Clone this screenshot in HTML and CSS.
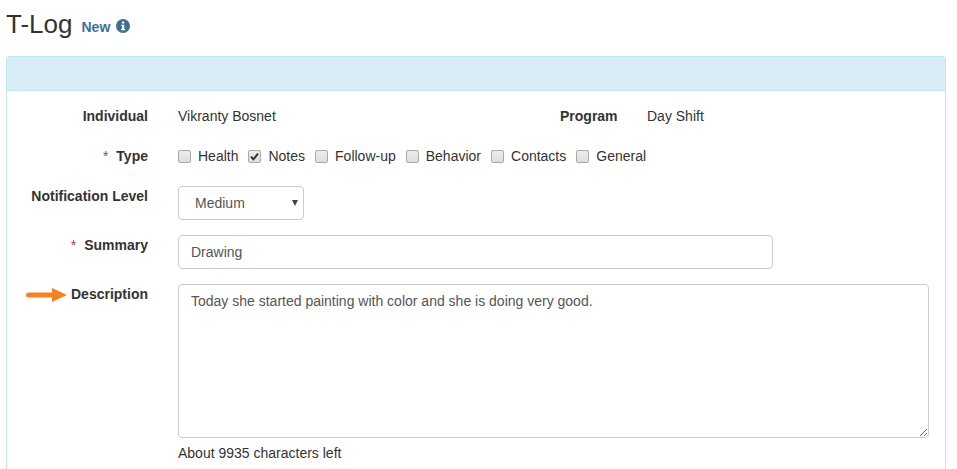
FILE: index.html
```html
<!DOCTYPE html>
<html lang="en">
<head>
<meta charset="utf-8">
<title>T-Log</title>
<link rel="stylesheet" href="styles.css">
</head>
<body>
<header class="page-title">
  <h1>T-Log</h1>
  <span class="status">New</span>
  <svg class="info" viewBox="0 0 14 14" width="14" height="14" aria-hidden="true">
    <circle cx="7" cy="7" r="7" fill="#3f6f91"/>
    <rect x="5.9" y="2.4" width="2.4" height="2.2" rx=".4" fill="#fff"/>
    <path d="M5.2 5.7h3.1v4.2h.8v1.4H5.1V9.9h.9V7.1h-.8z" fill="#fff"/>
  </svg>
</header>
<section class="panel">
  <div class="panel-heading"></div>
  <form class="panel-body">
    <div class="row">
      <div class="label">Individual</div>
      <div class="value split">
        <span class="cell-name">Vikranty Bosnet</span>
        <span class="label program">Program</span>
        <span>Day Shift</span>
      </div>
    </div>
    <div class="row">
      <div class="label"><span class="req">*</span>Type</div>
      <div class="value checks">
        <label class="check"><span class="box"></span>Health</label>
        <label class="check"><span class="box"><svg viewBox="0 0 13 13" width="13" height="13"><path d="M3 6.6l2.4 2.7L10 3.6" fill="none" stroke="#333" stroke-width="2"/></svg></span>Notes</label>
        <label class="check"><span class="box"></span>Follow-up</label>
        <label class="check"><span class="box"></span>Behavior</label>
        <label class="check"><span class="box"></span>Contacts</label>
        <label class="check"><span class="box"></span>General</label>
      </div>
    </div>
    <div class="row tall">
      <div class="label">Notification Level</div>
      <div class="value">
        <div class="control select">Medium<span class="caret"></span></div>
      </div>
    </div>
    <div class="row tall">
      <div class="label"><span class="req">*</span>Summary</div>
      <div class="value">
        <input class="control input" type="text" value="Drawing">
      </div>
    </div>
    <div class="row">
      <div class="label description">
        <svg class="arrow" viewBox="0 0 42 16" width="42" height="16" aria-hidden="true">
          <path d="M2.5 8H28" stroke="#f58220" stroke-width="5" stroke-linecap="round"/>
          <path d="M26 1l15 7-15 7z" fill="#f58220"/>
        </svg>
        Description
      </div>
      <div class="value">
        <textarea class="control area">Today she started painting with color and she is doing very good.</textarea>
        <div class="help">About 9935 characters left</div>
      </div>
    </div>
  </form>
</section>
</body>
</html>
```
FILE: styles.css
```css
* { box-sizing: border-box; }
html, body { height: 469px; overflow: hidden; }
body {
  margin: 0;
  padding: 0 11px 0 6px;
  background: #fff;
  color: #333;
  font: 14px/20px "Liberation Sans", Arial, sans-serif;
}
.page-title {
  display: flex;
  align-items: center;
  height: 56px;
  padding-bottom: 8px;
}
h1 {
  margin: 0 9px 0 0;
  font-size: 26px;
  font-weight: 400;
  line-height: 28px;
}
.status {
  margin: 6px 6px 0 0;
  color: #3f7099;
  font-weight: 700;
}
.info { margin-top: 4px; }
.panel {
  height: 430px;
  border: 1px solid #bce8f1;
  border-bottom: 0;
  border-radius: 4px 4px 0 0;
}
.panel-heading {
  height: 34px;
  background: #d9edf7;
  border-bottom: 1px solid #bce8f1;
  border-radius: 3px 3px 0 0;
}
.panel-body { padding: 15px 16px 0 0; }
.row { display: flex; margin-bottom: 20px; }
.row.tall { margin-bottom: 15px; }
.label {
  flex: 0 0 141px;
  text-align: right;
  font-weight: 700;
  position: relative;
}
.req {
  margin-right: 8px;
  color: #a94442;
  font-weight: 400;
}
.value { margin-left: 30px; flex: 1; min-width: 0; }
.split { display: flex; }
.cell-name { width: 382px; }
.label.program { flex: 0 0 auto; width: 57px; margin-right: 30px; white-space: nowrap; }
.checks { display: flex; }
.check { display: flex; align-items: center; margin-right: 10px; }
.box {
  display: block;
  width: 13px;
  height: 13px;
  margin-right: 7px;
  border: 1px solid #a9a9a9;
  border-radius: 2px;
  background: linear-gradient(#ededed, #dedede);
  position: relative;
}
.box svg { display: block; margin: -1px; }
.control {
  display: block;
  border: 1px solid #ccc;
  border-radius: 4px;
  background: #fff;
  color: #555;
  font: 14px/20px "Liberation Sans", Arial, sans-serif;
}
.select {
  position: relative;
  width: 126px;
  height: 34px;
  padding: 6px 16px;
}
.caret {
  position: absolute;
  right: 5px;
  top: 13px;
  border-style: solid;
  border-width: 6px 3.5px 0;
  border-color: #444 transparent transparent;
}
.input { width: 595px; height: 34px; padding: 6px 12px; outline: 0; }
.area {
  width: 751px;
  height: 154px;
  padding: 6px 12px;
  resize: both;
  outline: 0;
}
.help { margin-top: 5px; color: #333; }
.arrow { position: absolute; left: 19px; top: 3px; }
```
